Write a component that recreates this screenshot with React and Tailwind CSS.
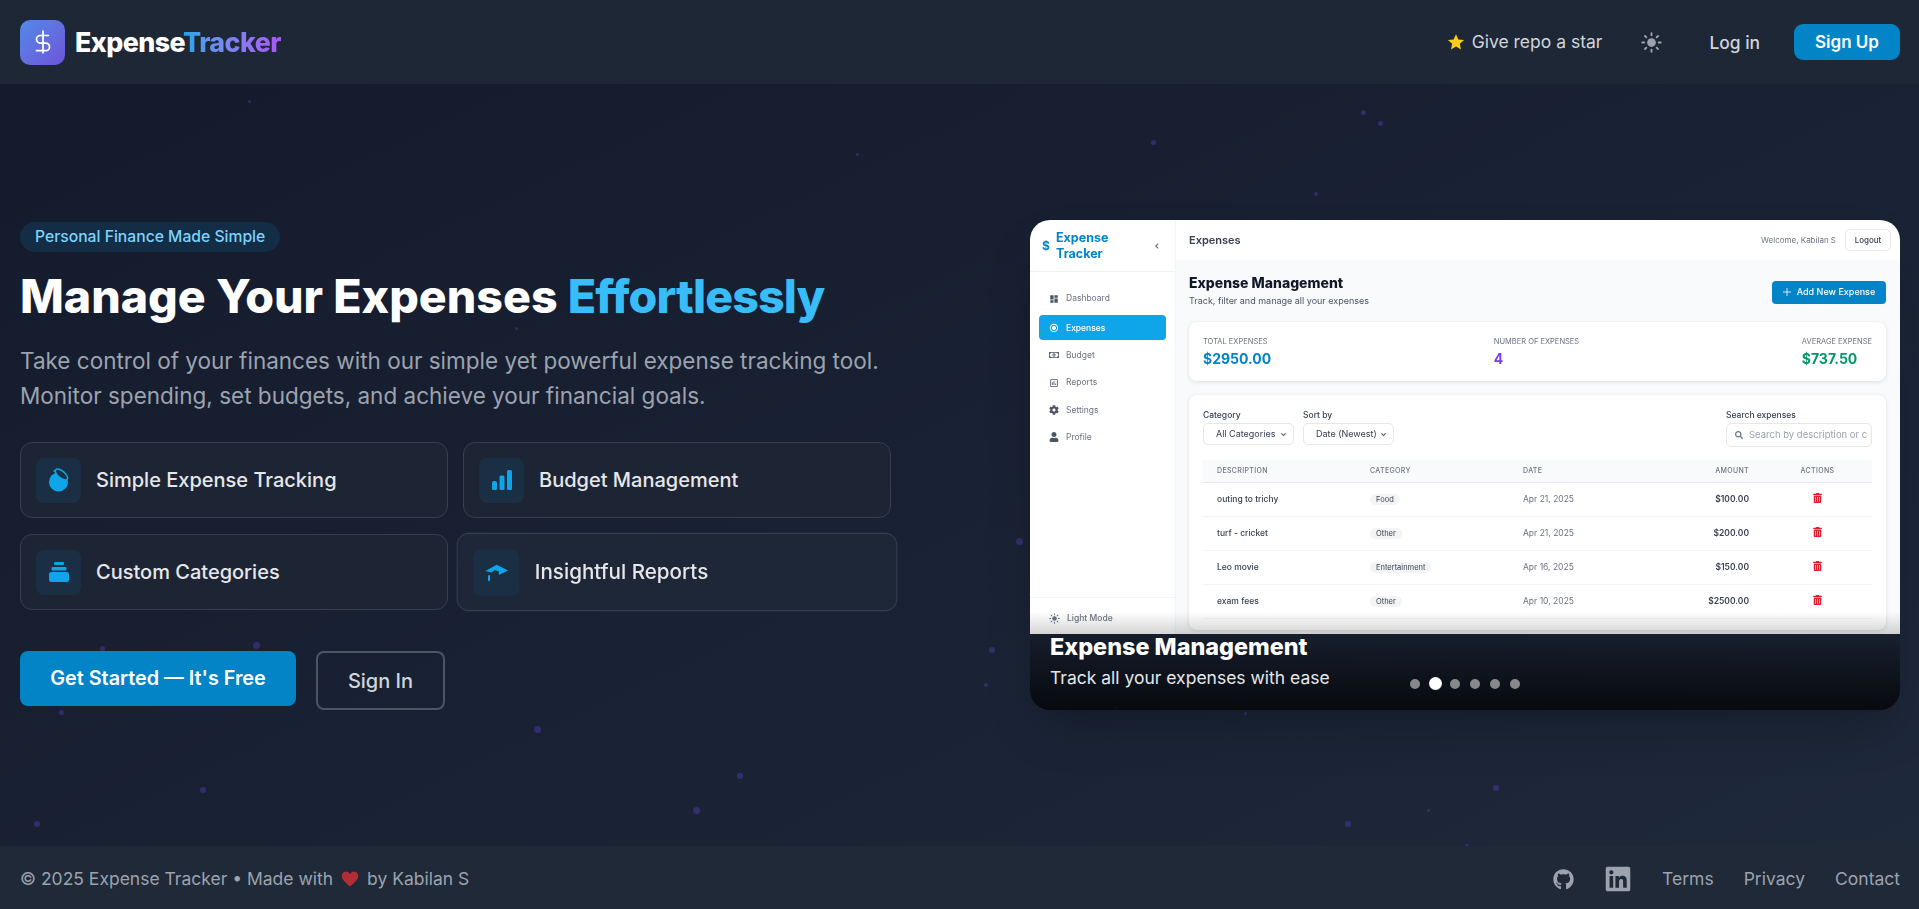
import { FaGithub, FaLinkedin, FaCog, FaUser, FaTrashAlt, FaSearch, FaRegMoneyBillAlt } from 'react-icons/fa'
import { MdDashboard, MdRadioButtonChecked, MdOutlineAssessment } from 'react-icons/md'

const particles = [
  [248, 100, 3], [1361, 110, 5], [1378, 121, 5], [1151, 140, 5], [1314, 192, 4], [856, 153, 3],
  [1016, 538, 7], [989, 647, 6], [984, 683, 4], [100, 646, 5], [253, 642, 7], [59, 710, 5],
  [534, 726, 7], [737, 773, 6], [693, 807, 7], [200, 787, 6], [34, 821, 6], [1493, 785, 6],
  [1345, 821, 6], [1465, 844, 4], [515, 327, 3], [1427, 809, 3], [1115, 706, 3], [1244, 712, 3],
]

const rows = [
  ['outing to trichy', 'Food', 'Apr 21, 2025', '$100.00'],
  ['turf - cricket', 'Other', 'Apr 21, 2025', '$200.00'],
  ['Leo movie', 'Entertainment', 'Apr 16, 2025', '$150.00'],
  ['exam fees', 'Other', 'Apr 10, 2025', '$2500.00'],
]

const menu = [
  ['Dashboard', MdDashboard],
  ['Expenses', MdRadioButtonChecked],
  ['Budget', FaRegMoneyBillAlt],
  ['Reports', MdOutlineAssessment],
  ['Settings', FaCog],
  ['Profile', FaUser],
]

function SunIcon({ className }) {
  return (
    <svg viewBox="0 0 24 24" className={className} fill="currentColor" stroke="currentColor" strokeWidth="2.2" strokeLinecap="round">
      <circle cx="12" cy="12" r="5" stroke="none" />
      <path d="M12 1.5v2.2M12 20.3v2.2M1.5 12h2.2M20.3 12h2.2M4.6 4.6l1.5 1.5M17.9 17.9l1.5 1.5M4.6 19.4l1.5-1.5M17.9 6.1l1.5-1.5" fill="none" />
    </svg>
  )
}

function BlobIcon() {
  return (
    <svg viewBox="0 0 24 24" className="w-6 h-6" fill="none">
      <circle cx="11.5" cy="14" r="9.5" fill="#0ea5e9" />
      <ellipse cx="14.5" cy="6.5" rx="7.5" ry="3.4" transform="rotate(40 14.5 6.5)" fill="#1b3146" stroke="#0ea5e9" strokeWidth="1.4" />
      <path d="M6.5 2.5l2.5 2" stroke="#0ea5e9" strokeWidth="1.4" />
    </svg>
  )
}

function BarsIcon() {
  return (
    <svg viewBox="0 0 24 24" className="w-6 h-6" fill="#0ea5e9">
      <rect x="2" y="13" width="5" height="9" rx="1.5" />
      <rect x="9.5" y="7.5" width="5" height="14.5" rx="1.5" />
      <rect x="17" y="2" width="5" height="20" rx="1.5" />
    </svg>
  )
}

function StackIcon() {
  return (
    <svg viewBox="0 0 24 24" className="w-6 h-6" fill="#0ea5e9">
      <rect x="7" y="2" width="10" height="3" rx="1" />
      <rect x="4.5" y="7" width="15" height="3.5" rx="1" />
      <rect x="2" y="12" width="20" height="10" rx="2.5" />
    </svg>
  )
}

function CapIcon() {
  return (
    <svg viewBox="0 0 24 24" className="w-6 h-6" fill="#0ea5e9">
      <path d="M1 11L12 5l11 5.5-9 4.5v-3.5l-4-1.5-3 2.5z" />
      <rect x="3.5" y="15" width="2" height="6" rx="1" />
    </svg>
  )
}

function FeatureCard({ icon, label, className = '' }) {
  return (
    <div className={`flex items-center gap-[15px] h-[76px] px-[15px] rounded-xl border border-[#363f50] bg-[#1d2534] ${className}`}>
      <div className="flex items-center justify-center w-[45px] h-[45px] rounded-lg bg-[#1a2f44]">{icon}</div>
      <span className="text-[20px] font-medium text-[#e5e7eb]">{label}</span>
    </div>
  )
}

function MiniSelect({ label, value, left }) {
  return (
    <div className={left}>
      <div className="text-[8.5px] leading-[12px] font-medium text-[#374151] mb-[2px]">{label}</div>
      <div className="flex items-center justify-between w-[91px] h-[22px] pl-3 pr-1.5 rounded-[5px] border border-[#e5e7eb] text-[9px] whitespace-nowrap text-[#374151]">
        {value}
        <svg viewBox="0 0 10 10" className="w-[7px] h-[7px] shrink-0" fill="none" stroke="#4b5563" strokeWidth="1.5"><path d="M2 3.5l3 3 3-3" /></svg>
      </div>
    </div>
  )
}

function MiniScreenshot() {
  return (
    <div className="flex h-[414px] overflow-hidden bg-white blur-[0.3px]">
      <aside className="flex flex-col w-[146px] shrink-0 border-r border-[#f1f5f9] bg-white">
        <div className="flex items-center h-[52px] pl-3 pr-[14px] border-b border-[#eef1f5] shrink-0">
          <span className="w-[14px] text-[12px] font-bold text-[#0284c7]">$</span>
          <div className="text-[12.5px] leading-[16px] font-bold text-[#0284c7]">Expense<br />Tracker</div>
          <svg viewBox="0 0 10 10" className="ml-auto w-[8px] h-[8px]" fill="none" stroke="#6b7280" strokeWidth="1.5"><path d="M6.5 2L3.5 5l3 3" /></svg>
        </div>
        <nav className="flex flex-col gap-[2.4px] pt-[14px] px-[9px]">
          {menu.map(([name, Icon], i) => (
            <div key={name} className={`flex items-center gap-[7px] h-[25px] pl-[10px] rounded-[4px] text-[8.5px] ${i === 0 ? 'mb-[2px]' : ''} ${i === 1 ? 'bg-[#0ea5e9] text-white font-medium' : 'text-[#6b7280]'}`}>
              <Icon className={`w-[10px] h-[10px] ${i === 1 ? 'text-white' : 'text-[#4b5563]'}`} />
              {name}
            </div>
          ))}
        </nav>
        <div className="mt-auto flex items-center gap-[7px] h-[37px] pl-[19px] pt-1 border-t border-[#f1f5f9] text-[8.5px] font-medium text-[#6b7280]">
          <SunIcon className="w-[11px] h-[11px] text-[#6b7280]" />
          Light Mode
        </div>
      </aside>
      <div className="flex-1 flex flex-col min-w-0 bg-[#f8fafc]">
        <header className="flex items-center h-[40px] shrink-0 pl-[13px] pr-[9px] bg-white">
          <span className="text-[11px] font-semibold text-[#374151]">Expenses</span>
          <span className="ml-auto text-[8px] text-[#6b7280]">Welcome, Kabilan S</span>
          <span className="ml-[9px] flex items-center justify-center w-[46px] h-[22px] rounded-[5px] border border-[#e5e7eb] text-[8px] font-medium text-[#374151]">Logout</span>
        </header>
        <div className="pl-[13px] pr-[14px] pt-4">
          <div className="flex items-center justify-between h-[32px] mb-[14px]">
            <div className="self-start -mt-[2px]">
              <div className="mb-[2px] text-[14px] leading-[18px] font-extrabold text-[#111827]">Expense Management</div>
              <div className="text-[9px] leading-[13px] text-[#4b5563]">Track, filter and manage all your expenses</div>
            </div>
            <div className="flex items-center justify-center gap-[6px] w-[114px] h-[23px] rounded-[4px] bg-[#0284c7] text-[9px] font-medium text-white">
              <svg viewBox="0 0 10 10" className="w-[8px] h-[8px]" stroke="white" strokeWidth="1"><path d="M5 0v10M0 5h10" /></svg>
              Add New Expense
            </div>
          </div>
          <div className="flex justify-between h-[59px] px-[14px] pt-[14px] mb-[14px] rounded-lg bg-white shadow-[0_1px_4px_rgba(0,0,0,0.12)]">
            <div>
              <div className="text-[7.5px] leading-[12px] text-[#6b7280]">TOTAL EXPENSES</div>
              <div className="text-[14px] leading-[22px] font-bold text-[#0284c7]">$2950.00</div>
            </div>
            <div>
              <div className="text-[7.5px] leading-[12px] text-[#6b7280]">NUMBER OF EXPENSES</div>
              <div className="text-[14px] leading-[22px] font-bold text-[#7c3aed]">4</div>
            </div>
            <div>
              <div className="text-[7.5px] leading-[12px] text-[#6b7280]">AVERAGE EXPENSE</div>
              <div className="text-[14px] leading-[22px] font-bold text-[#059669]">$737.50</div>
            </div>
          </div>
          <div className="h-[235px] px-[14px] pt-[14px] rounded-lg bg-white shadow-[0_1px_4px_rgba(0,0,0,0.12)]">
            <div className="flex items-start h-[51px]">
              <MiniSelect label="Category" value="All Categories" />
              <MiniSelect label="Sort by" value="Date (Newest)" left="ml-[9px]" />
              <div className="ml-auto">
                <div className="text-[8.5px] leading-[12px] font-medium text-[#374151] mb-[2px]">Search expenses</div>
                <div className="flex items-center gap-[6px] w-[146px] h-[24px] pl-[8px] rounded-[5px] border border-[#e5e7eb] text-[9.5px] text-[#9ca3af] overflow-hidden whitespace-nowrap">
                  <FaSearch className="w-[8px] h-[8px] shrink-0 text-[#6b7280]" />
                  Search by description or c
                </div>
              </div>
            </div>
            <div className="grid grid-cols-[167px_153px_153px_87px_109px] items-center h-[23px] bg-[#f8fafc] border-b border-[#e5e7eb] text-[7px] font-medium tracking-[0.05em] text-[#6b7280]">
              <span className="pl-[14px]">DESCRIPTION</span>
              <span>CATEGORY</span>
              <span>DATE</span>
              <span className="pr-[14px] text-right">AMOUNT</span>
              <span className="text-center">ACTIONS</span>
            </div>
            {rows.map(([desc, cat, date, amount]) => (
              <div key={desc} className="grid grid-cols-[167px_153px_153px_87px_109px] items-center h-[34px] border-b border-[#f1f5f9] text-[8.5px]">
                <span className="pl-[14px] font-medium text-[#374151]">{desc}</span>
                <span><span className="inline-block px-[6px] leading-[11px] rounded-full bg-[#f3f4f6] text-[7.5px] text-[#374151]">{cat}</span></span>
                <span className="text-[#6b7280]">{date}</span>
                <span className="pr-[14px] text-right font-semibold text-[#374151]">{amount}</span>
                <span className="flex justify-center -translate-y-[2px]"><FaTrashAlt className="w-[9px] h-[10px] text-[#e11d2e]" /></span>
              </div>
            ))}
          </div>
        </div>
      </div>
    </div>
  )
}

export default function App() {
  return (
    <div className="relative flex flex-col h-[909px] overflow-hidden bg-linear-to-br from-[#131a2b] to-[#1e293b] font-['Inter',sans-serif]">
      {particles.map(([x, y, size], i) => (
        <span key={i} className="absolute rounded-full bg-[#4f3fb5]/45" style={{ left: x, top: y, width: size, height: size }} />
      ))}

      <nav className="relative flex items-center h-[84px] shrink-0 pl-5 pr-[19px] bg-[#1e2736]">
        <div className="flex items-center justify-center w-[45px] h-[45px] rounded-[10px] bg-linear-to-br from-[#4f8ae8] to-[#6d52d9] text-white">
          <svg viewBox="0 0 24 24" className="w-[26px] h-[26px]" fill="none" stroke="currentColor" strokeWidth="1.6" strokeLinecap="round" strokeLinejoin="round">
            <path d="M12 2v20M17 6H9.5a3.5 3.5 0 0 0 0 7h5a3.5 3.5 0 0 1 0 7H6" />
          </svg>
        </div>
        <div className="ml-[10px] text-[26.8px] font-extrabold tracking-[-0.02em]">
          <span className="text-white">Expense</span>
          <span className="bg-linear-to-r from-[#0ea5e9] to-[#a855f7] bg-clip-text text-transparent">Tracker</span>
        </div>
        <div className="ml-auto flex items-center gap-[7px] text-[17.5px] text-[#d1d5db]">
          <svg viewBox="0 0 24 24" className="w-[18px] h-[18px]" fill="#facc15"><path d="M12 1.5l3.2 7 7.6.8-5.7 5.1 1.6 7.5L12 18.1l-6.7 3.8 1.6-7.5L1.2 9.3l7.6-.8z" /></svg>
          Give repo a star
        </div>
        <SunIcon className="ml-[39px] w-[21px] h-[21px] text-[#9ca3af]" />
        <span className="ml-[47px] pt-[2px] text-[17.4px] font-medium text-[#d1d5db]">Log in</span>
        <span className="ml-[34px] flex items-center justify-center w-[106px] h-[36px] pt-[2px] rounded-[9px] bg-[#0284c7] text-[17px] font-semibold text-white">Sign Up</span>
      </nav>

      <main className="relative flex-1 flex items-center justify-between pl-5 pr-[19px]">
        <div className="w-[870px] pt-[2px]">
          <span className="inline-flex items-center h-[30px] px-[15px] rounded-full bg-[#132d46] text-[15.7px] font-medium text-[#7dd3fc]">Personal Finance Made Simple</span>
          <h1 className="mt-[11px] text-[46.5px] leading-[66px] font-extrabold text-white">
            Manage Your Expenses <span className="tracking-[-0.02em] text-[#38bdf8]">Effortlessly</span>
          </h1>
          <p className="mt-[14px] text-[22.5px] leading-[35px] text-[#9ca3af]">
            Take control of your finances with our simple yet powerful expense tracking tool.<br />
            Monitor spending, set budgets, and achieve your financial goals.
          </p>
          <div className="grid grid-cols-[428px_428px] gap-x-[15px] gap-y-4 mt-[29px]">
            <FeatureCard icon={<BlobIcon />} label="Simple Expense Tracking" />
            <FeatureCard icon={<BarsIcon />} label="Budget Management" />
            <FeatureCard icon={<StackIcon />} label="Custom Categories" />
            <FeatureCard icon={<CapIcon />} label="Insightful Reports" className="scale-[1.03] bg-[#1e2737]" />
          </div>
          <div className="flex items-start gap-5 mt-[41px]">
            <span className="flex items-center justify-center w-[276px] h-[55px] rounded-lg bg-[#0284c7] text-[19.8px] font-semibold text-white">Get Started — It's Free</span>
            <span className="flex items-center justify-center w-[129px] h-[59px] rounded-lg border-2 border-[#4b5563] text-[20px] font-medium text-[#d1d5db]">Sign In</span>
          </div>
        </div>

        <div className="relative w-[870px] h-[490px] rounded-[20px] overflow-hidden shadow-2xl">
          <MiniScreenshot />
          <div className="absolute inset-x-0 bottom-0 h-[98px] bg-linear-to-t from-black/75 to-transparent">
            <div className="absolute left-5 top-[21px] text-[23.4px] leading-[28px] font-extrabold text-white">Expense Management</div>
            <div className="absolute left-5 top-[55px] text-[17.5px] leading-[22px] text-[#e5e7eb]">Track all your expenses with ease</div>
            <div className="absolute left-[380px] top-[65px] flex items-center gap-[10px]">
              {[0, 1, 2, 3, 4, 5].map((i) => (
                <span key={i} className={i === 1 ? '-mx-[1.5px] w-[13px] h-[13px] rounded-full bg-white' : 'w-[10px] h-[10px] rounded-full bg-white/50'} />
              ))}
            </div>
          </div>
        </div>
      </main>

      <footer className="relative flex items-center h-[63px] shrink-0 pl-5 pr-[19px] pt-[3px] bg-[#1f2937] text-[17.5px] text-[#9ca3af]">
        <span>© 2025 Expense Tracker • Made with</span>
        <svg viewBox="0 0 24 24" className="mx-[8px] w-[18px] h-[18px]" fill="#b32d35"><path d="M12 22C5 16 1 12.5 1 8a5.7 5.7 0 0 1 11-2.2A5.7 5.7 0 0 1 23 8c0 4.5-4 8-11 14z" /></svg>
        <span>by Kabilan S</span>
        <div className="ml-auto flex items-center">
          <FaGithub className="w-[21px] h-[21px]" />
          <FaLinkedin className="ml-[30px] w-[28px] h-[28px]" />
          <span className="ml-[30px]">Terms</span>
          <span className="ml-[30px]">Privacy</span>
          <span className="ml-[30px]">Contact</span>
        </div>
      </footer>
    </div>
  )
}
